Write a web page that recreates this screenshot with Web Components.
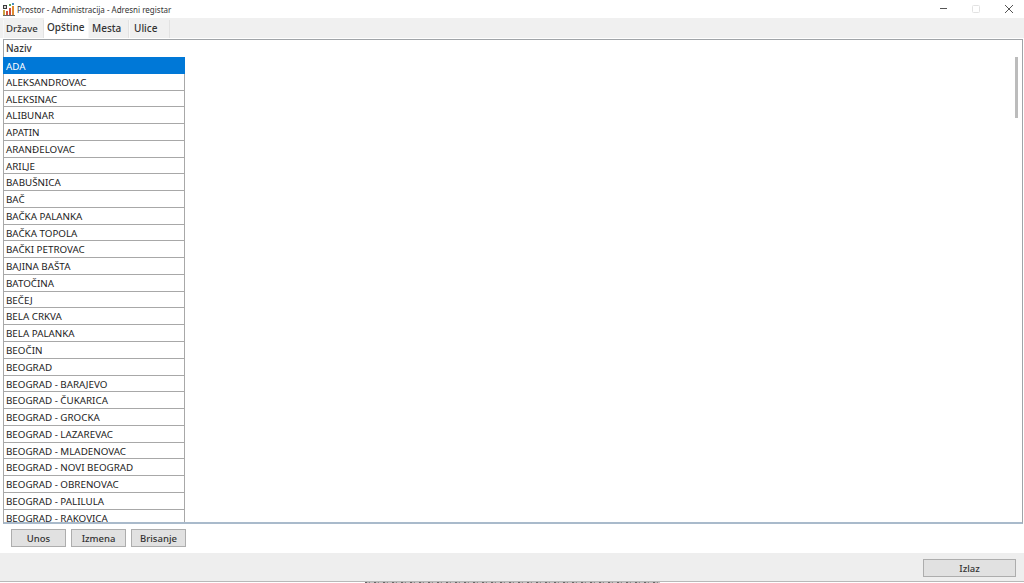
<!DOCTYPE html>
<html>
<head>
<meta charset="utf-8">
<title>Prostor - Administracija - Adresni registar</title>
<style>
  html, body { margin: 0; height: 100%; overflow: hidden; background: #fff; }
  body { font: 9.8px "Noto Sans", "Open Sans", sans-serif; color: #222; }
</style>
</head>
<body>
<app-window></app-window>

<script>
// titlebar with icon and window buttons
class TitleBar extends HTMLElement {
    constructor() {
        super();
        this.attachShadow({ mode: 'open' });
        this.shadowRoot.innerHTML = `
            <style>
                :host { display: flex; align-items: center; height: 18px; background: #fff; flex: none; }
                svg { display: block; flex: none; }
                .logo { margin: 0 2px 0 3px; }
                .title { flex: 1; font-size: 8px; color: #333; }
                .btns { display: flex; gap: 24px; padding-right: 11px; align-items: center; }
                .btns svg:last-child { margin-left: 1px; }
            </style>
            <svg class="logo" width="12" height="13" viewBox="0 0 12 13">
                <rect x="0" y="2" width="4" height="4" fill="#3a3a3a"/>
                <rect x="1" y="3" width="2" height="2" fill="#d8d8d8"/>
                <rect x="0" y="7" width="2" height="5" fill="#c9a040"/>
                <rect x="3" y="8" width="2" height="4" fill="#d0503c"/>
                <rect x="6" y="5" width="2" height="7" fill="#d04a3a"/>
                <rect x="9" y="3" width="2" height="9" fill="#e08a30"/>
                <rect x="6" y="1" width="2" height="2" fill="#5aa64a"/>
                <rect x="9" y="0" width="2" height="2" fill="#4a8ec0"/>
                <rect x="0" y="12" width="12" height="1" fill="#666"/>
            </svg>
            <span class="title"><slot></slot></span>
            <div class="btns">
                <svg width="8" height="8" viewBox="0 0 8 8"><path d="M0 3.5h7" stroke="#555" stroke-width="1"/></svg>
                <svg width="8" height="8" viewBox="0 0 8 8"><rect x="0.5" y="0.5" width="7" height="7" rx="1" fill="none" stroke="#e2e2e2"/></svg>
                <svg width="8" height="8" viewBox="0 0 8 8"><path d="M0 0l8 8M8 0l-8 8" stroke="#555" stroke-width="1"/></svg>
            </div>
        `;
    }
}

class TabStrip extends HTMLElement {
    static get observedAttributes() { return ['tabs', 'active']; }
    constructor() {
        super();
        this.attachShadow({ mode: 'open' });
    }
    connectedCallback() { this.render(); }
    attributeChangedCallback() { this.render(); }
    render() {
        const tabs = (this.getAttribute('tabs') || '').split(',');
        const active = this.getAttribute('active');
        this.shadowRoot.innerHTML = `
            <style>
                :host { display: flex; align-items: flex-end; height: 20px; padding-left: 3px; background: #f0f0f0; flex: none; font-size: 10px; font-weight: 500; }
                .tab { box-sizing: border-box; width: 41px; height: 18px; padding-left: 3px; line-height: 17px; background: #f0f0f0; border-right: 1px solid #e2e2e2; border-left: 1px solid #f8f8f8; color: #333; }
                .tab.on { width: 44px; height: 20px; background: #fff; line-height: 18px; border: 0; padding-left: 3px; }
                .tab:first-of-type { padding-left: 2px; font-size: 9.6px; }
                .tab:last-of-type { padding-left: 4px; }
            </style>
            ${tabs.map(t => `<div class="tab ${t === active ? 'on' : ''}">${t}</div>`).join('')}
        `;
    }
}

class CityList extends HTMLElement {
    constructor() {
        super();
        this.attachShadow({ mode: 'open' });
    }
    setRows(rows) {
        this.shadowRoot.innerHTML = `
            <style>
                :host { display: block; width: 182px; height: 100%; margin-left: -1px; overflow: hidden; font-size: 9.8px; color: #222; }
                .head { height: 17px; line-height: 17px; padding-left: 3px; font-weight: 500; color: #333; }
                .row { box-sizing: border-box; height: 16.78px; line-height: 17px; padding-left: 2px; background: #fff; border: 1px solid #a8a8a8; border-top: 0; white-space: nowrap; }
                .row.first { border-top: 1px solid #a8a8a8; }
                .row.sel { background: #0078d7; color: #fff; border-color: #0078d7; }
            </style>
            <div class="head">Naziv</div>
            ${rows.map((r, i) => `<div class="row ${i === 0 ? 'first sel' : ''}">${r}</div>`).join('')}
        `;
    }
}

class GrayButton extends HTMLElement {
    constructor() {
        super();
        this.attachShadow({ mode: 'open' });
        this.shadowRoot.innerHTML = `
            <style>
                :host { display: flex; align-items: center; justify-content: center; box-sizing: border-box; height: 18px; background: #e1e1e1; border: 1px solid #adadad; font-size: 9.5px; font-weight: 500; color: #333; }
            </style>
            <slot></slot>
        `;
    }
}

class AppWindow extends HTMLElement {
    constructor() {
        super();
        this.attachShadow({ mode: 'open' });
        this.shadowRoot.innerHTML = `
            <style>
                :host { display: flex; flex-direction: column; height: 583px; background: #fff; position: relative; }
                .panel { box-sizing: border-box; flex: none; height: 485px; margin: 1px 0 0 3px; width: 1020px; border: 1px solid #a0a4a8; border-bottom: 2px solid #a9bacb; position: relative; background: #fff; }
                .scroll { position: absolute; right: 4px; top: 17px; width: 3px; height: 61px; background: #bcbcbc; }
                .actions { flex: none; height: 29px; box-sizing: border-box; display: flex; gap: 5px; padding: 5px 0 0 11px; }
                .actions gray-button { width: 55px; }
                .foot { flex: none; height: 29px; box-sizing: border-box; background: #eeeeee; border-bottom: 1px solid #b8b8b8; display: flex; justify-content: flex-end; padding: 6px 8px 0 0; }
                .foot gray-button { width: 93px; }
                .fill { flex: 1; background: #fff; }
                /* window behind shows through on the last pixel row */
                .behind { position: absolute; left: 365px; bottom: 0; width: 295px; height: 1px; background: repeating-linear-gradient(90deg, #666 0 2px, #b8b8b8 2px 4px, #8a8a8a 4px 5px, #c4c4c4 5px 9px); }
            </style>
            <title-bar>Prostor - Administracija - Adresni registar</title-bar>
            <tab-strip tabs="Države,Opštine,Mesta,Ulice" active="Opštine"></tab-strip>
            <div class="panel">
                <city-list></city-list>
                <div class="scroll"></div>
            </div>
            <div class="actions">
                <gray-button>Unos</gray-button>
                <gray-button>Izmena</gray-button>
                <gray-button>Brisanje</gray-button>
            </div>
            <div class="foot"><gray-button>Izlaz</gray-button></div>
            <div class="fill"></div>
            <div class="behind"></div>
        `;
    }
    connectedCallback() {
        this.shadowRoot.querySelector('city-list').setRows(OPSTINE);
    }
}

const OPSTINE = [
    'ADA', 'ALEKSANDROVAC', 'ALEKSINAC', 'ALIBUNAR', 'APATIN', 'ARANĐELOVAC', 'ARILJE',
    'BABUŠNICA', 'BAČ', 'BAČKA PALANKA', 'BAČKA TOPOLA', 'BAČKI PETROVAC', 'BAJINA BAŠTA',
    'BATOČINA', 'BEČEJ', 'BELA CRKVA', 'BELA PALANKA', 'BEOČIN', 'BEOGRAD',
    'BEOGRAD - BARAJEVO', 'BEOGRAD - ČUKARICA', 'BEOGRAD - GROCKA', 'BEOGRAD - LAZAREVAC',
    'BEOGRAD - MLADENOVAC', 'BEOGRAD - NOVI BEOGRAD', 'BEOGRAD - OBRENOVAC',
    'BEOGRAD - PALILULA', 'BEOGRAD - RAKOVICA'
];

customElements.define('title-bar', TitleBar);
customElements.define('tab-strip', TabStrip);
customElements.define('city-list', CityList);
customElements.define('gray-button', GrayButton);
customElements.define('app-window', AppWindow);
</script>
</body>
</html>
